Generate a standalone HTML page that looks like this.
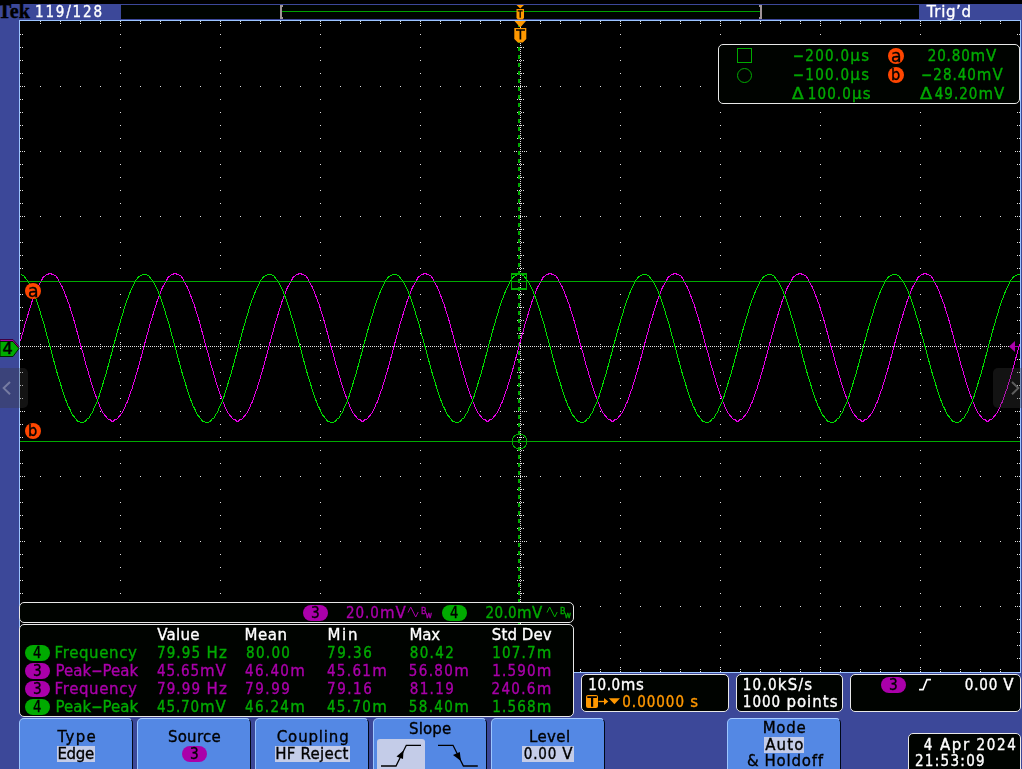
<!DOCTYPE html>
<html lang="en"><head><meta charset="utf-8"><title>Tek oscilloscope</title>
<style>
html,body{margin:0;padding:0}
body{width:1022px;height:769px;overflow:hidden;background:#3c4899;position:relative;font-family:"DejaVu Sans","Liberation Sans",sans-serif;font-size:14px}
.abs{position:absolute}
.t{position:absolute;white-space:pre;line-height:16px;transform-origin:0 0;font-size:15px;-webkit-text-stroke:0.35px}
.box{position:absolute;background:#000300;border:1px solid #e8e8e8;border-radius:5px;box-sizing:border-box}
.c{font-family:"DejaVu Sans Condensed","DejaVu Sans","Liberation Sans",sans-serif}
.pill{position:absolute;border-radius:8px}
.btn{position:absolute;top:718px;height:60px;background:#5488e4;border-radius:5px 5px 0 0;box-sizing:border-box;border-top:1px solid #a8ccff;border-left:1px solid #9cc6ff;border-right:1px solid #000818}
.hl{position:absolute;background:#c4cce8}
.circ{position:absolute;width:16px;height:16px;border-radius:8px;background:#ff4600}
</style></head><body>
<div class="abs" style="left:0;top:0;width:1022px;height:4px;background:#000"></div>
<div class="abs" style="left:121px;top:5px;width:798px;height:14px;background:#000400"></div>
<div class="abs" style="left:19px;top:20px;width:1000px;height:651px;background:#000;border:1px solid #9cc4ff"></div>
<svg class="abs" style="left:0;top:0" width="1022" height="769" viewBox="0 0 1022 769">
<g shape-rendering="crispEdges">
<line x1="282" y1="11.5" x2="760" y2="11.5" stroke="#00a000" stroke-width="1"/>
<path d="M280 5h3v2h-1v10h1v2h-3zM762 5h-3v2h1v10h-1v2h3z" fill="#a09498"/>
</g>
<path d="M516.5 5h7.5l-3.75 3.5zM516.5 9h7.5v9l-1.5 1.5h-4.5l-1.5 -1.5z" fill="#ff9800"/>
<path d="M517.7 10.8h5M520.2 10.8v7" stroke="#000" stroke-width="1.3" fill="none"/>
</svg>
<svg class="abs" style="left:0;top:0" width="1022" height="769" viewBox="0 0 1022 769" shape-rendering="crispEdges">
<line x1="20" y1="86.5" x2="1020" y2="86.5" stroke="#e0e0e0" stroke-dasharray="1 19"/>
<line x1="20" y1="151.5" x2="1020" y2="151.5" stroke="#e0e0e0" stroke-dasharray="1 19"/>
<line x1="20" y1="216.5" x2="1020" y2="216.5" stroke="#e0e0e0" stroke-dasharray="1 19"/>
<line x1="20" y1="281.5" x2="1020" y2="281.5" stroke="#e0e0e0" stroke-dasharray="1 19"/>
<line x1="20" y1="411.5" x2="1020" y2="411.5" stroke="#e0e0e0" stroke-dasharray="1 19"/>
<line x1="20" y1="476.5" x2="1020" y2="476.5" stroke="#e0e0e0" stroke-dasharray="1 19"/>
<line x1="20" y1="541.5" x2="1020" y2="541.5" stroke="#e0e0e0" stroke-dasharray="1 19"/>
<line x1="20" y1="606.5" x2="1020" y2="606.5" stroke="#e0e0e0" stroke-dasharray="1 19"/>
<line x1="120.5" y1="21" x2="120.5" y2="672" stroke="#e0e0e0" stroke-dasharray="1 12"/>
<line x1="220.5" y1="21" x2="220.5" y2="672" stroke="#e0e0e0" stroke-dasharray="1 12"/>
<line x1="320.5" y1="21" x2="320.5" y2="672" stroke="#e0e0e0" stroke-dasharray="1 12"/>
<line x1="420.5" y1="21" x2="420.5" y2="672" stroke="#e0e0e0" stroke-dasharray="1 12"/>
<line x1="620.5" y1="21" x2="620.5" y2="672" stroke="#e0e0e0" stroke-dasharray="1 12"/>
<line x1="720.5" y1="21" x2="720.5" y2="672" stroke="#e0e0e0" stroke-dasharray="1 12"/>
<line x1="820.5" y1="21" x2="820.5" y2="672" stroke="#e0e0e0" stroke-dasharray="1 12"/>
<line x1="920.5" y1="21" x2="920.5" y2="672" stroke="#e0e0e0" stroke-dasharray="1 12"/>
<line x1="20" y1="346.5" x2="1020" y2="346.5" stroke="#e0e0e0" stroke-dasharray="1 1"/>
<line x1="520.5" y1="21" x2="520.5" y2="672" stroke="#e0e0e0" stroke-dasharray="1 1"/>
<path d="M40.5 344v5M60.5 344v5M80.5 344v5M100.5 344v5M120.5 342v9M140.5 344v5M160.5 344v5M180.5 344v5M200.5 344v5M220.5 342v9M240.5 344v5M260.5 344v5M280.5 344v5M300.5 344v5M320.5 342v9M340.5 344v5M360.5 344v5M380.5 344v5M400.5 344v5M420.5 342v9M440.5 344v5M460.5 344v5M480.5 344v5M500.5 344v5M540.5 344v5M560.5 344v5M580.5 344v5M600.5 344v5M620.5 342v9M640.5 344v5M660.5 344v5M680.5 344v5M700.5 344v5M720.5 342v9M740.5 344v5M760.5 344v5M780.5 344v5M800.5 344v5M820.5 342v9M840.5 344v5M860.5 344v5M880.5 344v5M900.5 344v5M920.5 342v9M940.5 344v5M960.5 344v5M980.5 344v5M1000.5 344v5M517 34.5h7M517 47.5h7M517 60.5h7M517 73.5h7M514 86.5h13M517 99.5h7M517 112.5h7M517 125.5h7M517 138.5h7M514 151.5h13M517 164.5h7M517 177.5h7M517 190.5h7M517 203.5h7M514 216.5h13M517 229.5h7M517 242.5h7M517 255.5h7M517 268.5h7M514 281.5h13M517 294.5h7M517 307.5h7M517 320.5h7M517 333.5h7M517 359.5h7M517 372.5h7M517 385.5h7M517 398.5h7M514 411.5h13M517 424.5h7M517 437.5h7M517 450.5h7M517 463.5h7M514 476.5h13M517 489.5h7M517 502.5h7M517 515.5h7M517 528.5h7M514 541.5h13M517 554.5h7M517 567.5h7M517 580.5h7M517 593.5h7M514 606.5h13M517 619.5h7M517 632.5h7M517 645.5h7M517 658.5h7" stroke="#e0e0e0" stroke-dasharray="1 1" fill="none"/>
<path d="M40.5 21v3M40.5 669v3M60.5 21v3M60.5 669v3M80.5 21v3M80.5 669v3M100.5 21v3M100.5 669v3M120.5 21v5M120.5 667v5M140.5 21v3M140.5 669v3M160.5 21v3M160.5 669v3M180.5 21v3M180.5 669v3M200.5 21v3M200.5 669v3M220.5 21v5M220.5 667v5M240.5 21v3M240.5 669v3M260.5 21v3M260.5 669v3M280.5 21v3M280.5 669v3M300.5 21v3M300.5 669v3M320.5 21v5M320.5 667v5M340.5 21v3M340.5 669v3M360.5 21v3M360.5 669v3M380.5 21v3M380.5 669v3M400.5 21v3M400.5 669v3M420.5 21v5M420.5 667v5M440.5 21v3M440.5 669v3M460.5 21v3M460.5 669v3M480.5 21v3M480.5 669v3M500.5 21v3M500.5 669v3M520.5 21v5M520.5 667v5M540.5 21v3M540.5 669v3M560.5 21v3M560.5 669v3M580.5 21v3M580.5 669v3M600.5 21v3M600.5 669v3M620.5 21v5M620.5 667v5M640.5 21v3M640.5 669v3M660.5 21v3M660.5 669v3M680.5 21v3M680.5 669v3M700.5 21v3M700.5 669v3M720.5 21v5M720.5 667v5M740.5 21v3M740.5 669v3M760.5 21v3M760.5 669v3M780.5 21v3M780.5 669v3M800.5 21v3M800.5 669v3M820.5 21v5M820.5 667v5M840.5 21v3M840.5 669v3M860.5 21v3M860.5 669v3M880.5 21v3M880.5 669v3M900.5 21v3M900.5 669v3M920.5 21v5M920.5 667v5M940.5 21v3M940.5 669v3M960.5 21v3M960.5 669v3M980.5 21v3M980.5 669v3M1000.5 21v3M1000.5 669v3M20 34.5h3M1017 34.5h3M20 47.5h3M1017 47.5h3M20 60.5h3M1017 60.5h3M20 73.5h3M1017 73.5h3M20 86.5h5M1015 86.5h5M20 99.5h3M1017 99.5h3M20 112.5h3M1017 112.5h3M20 125.5h3M1017 125.5h3M20 138.5h3M1017 138.5h3M20 151.5h5M1015 151.5h5M20 164.5h3M1017 164.5h3M20 177.5h3M1017 177.5h3M20 190.5h3M1017 190.5h3M20 203.5h3M1017 203.5h3M20 216.5h5M1015 216.5h5M20 229.5h3M1017 229.5h3M20 242.5h3M1017 242.5h3M20 255.5h3M1017 255.5h3M20 268.5h3M1017 268.5h3M20 281.5h5M1015 281.5h5M20 294.5h3M1017 294.5h3M20 307.5h3M1017 307.5h3M20 320.5h3M1017 320.5h3M20 333.5h3M1017 333.5h3M20 346.5h5M1015 346.5h5M20 359.5h3M1017 359.5h3M20 372.5h3M1017 372.5h3M20 385.5h3M1017 385.5h3M20 398.5h3M1017 398.5h3M20 411.5h5M1015 411.5h5M20 424.5h3M1017 424.5h3M20 437.5h3M1017 437.5h3M20 450.5h3M1017 450.5h3M20 463.5h3M1017 463.5h3M20 476.5h5M1015 476.5h5M20 489.5h3M1017 489.5h3M20 502.5h3M1017 502.5h3M20 515.5h3M1017 515.5h3M20 528.5h3M1017 528.5h3M20 541.5h5M1015 541.5h5M20 554.5h3M1017 554.5h3M20 567.5h3M1017 567.5h3M20 580.5h3M1017 580.5h3M20 593.5h3M1017 593.5h3M20 606.5h5M1015 606.5h5M20 619.5h3M1017 619.5h3M20 632.5h3M1017 632.5h3M20 645.5h3M1017 645.5h3M20 658.5h3M1017 658.5h3" stroke="#e0e0e0" stroke-dasharray="1 1" fill="none"/>
<line x1="519" y1="23" x2="519" y2="672" stroke="#00aa00" stroke-width="2" stroke-dasharray="4 4"/>
<polyline points="20.5,340.6 21.5,336.7 22.5,334.1 23.5,330.2 24.5,326.3 25.5,322.4 26.5,319.8 27.5,315.9 28.5,313.3 29.5,309.4 30.5,306.8 31.5,302.9 32.5,300.3 33.5,297.7 34.5,295.1 35.5,292.5 36.5,289.9 37.5,287.3 38.5,286.0 39.5,283.4 40.5,282.1 41.5,280.8 42.5,278.2 43.5,276.9 44.5,276.9 45.5,275.6 46.5,274.3 47.5,274.3 48.5,274.3 49.5,273.0 50.5,273.0 51.5,274.3 52.5,274.3 53.5,274.3 54.5,275.6 55.5,275.6 56.5,276.9 57.5,278.2 58.5,279.5 59.5,282.1 60.5,283.4 61.5,286.0 62.5,287.3 63.5,289.9 64.5,292.5 65.5,295.1 66.5,297.7 67.5,300.3 68.5,302.9 69.5,305.5 70.5,309.4 71.5,312.0 72.5,315.9 73.5,318.5 74.5,322.4 75.5,326.3 76.5,330.2 77.5,332.8 78.5,336.7 79.5,340.6 80.5,344.5 81.5,348.4 82.5,351.0 83.5,354.9 84.5,358.8 85.5,362.7 86.5,366.6 87.5,369.2 88.5,373.1 89.5,377.0 90.5,379.6 91.5,383.5 92.5,386.1 93.5,390.0 94.5,392.6 95.5,395.2 96.5,397.8 97.5,400.4 98.5,403.0 99.5,405.6 100.5,408.2 101.5,409.5 102.5,412.1 103.5,413.4 104.5,414.7 105.5,416.0 106.5,417.3 107.5,418.6 108.5,419.9 109.5,419.9 110.5,419.9 111.5,421.2 112.5,421.2 113.5,421.2 114.5,419.9 115.5,419.9 116.5,419.9 117.5,418.6 118.5,417.3 119.5,416.0 120.5,414.7 121.5,413.4 122.5,412.1 123.5,409.5 124.5,408.2 125.5,405.6 126.5,403.0 127.5,401.7 128.5,399.1 129.5,395.2 130.5,392.6 131.5,390.0 132.5,387.4 133.5,383.5 134.5,380.9 135.5,377.0 136.5,373.1 137.5,370.5 138.5,366.6 139.5,362.7 140.5,358.8 141.5,356.2 142.5,352.3 143.5,348.4 144.5,344.5 145.5,340.6 146.5,336.7 147.5,334.1 148.5,330.2 149.5,326.3 150.5,322.4 151.5,319.8 152.5,315.9 153.5,313.3 154.5,309.4 155.5,306.8 156.5,302.9 157.5,300.3 158.5,297.7 159.5,295.1 160.5,292.5 161.5,289.9 162.5,287.3 163.5,286.0 164.5,283.4 165.5,282.1 166.5,280.8 167.5,278.2 168.5,276.9 169.5,276.9 170.5,275.6 171.5,274.3 172.5,274.3 173.5,274.3 174.5,273.0 175.5,273.0 176.5,274.3 177.5,274.3 178.5,274.3 179.5,275.6 180.5,275.6 181.5,276.9 182.5,278.2 183.5,279.5 184.5,282.1 185.5,283.4 186.5,286.0 187.5,287.3 188.5,289.9 189.5,292.5 190.5,295.1 191.5,297.7 192.5,300.3 193.5,302.9 194.5,305.5 195.5,309.4 196.5,312.0 197.5,315.9 198.5,318.5 199.5,322.4 200.5,326.3 201.5,330.2 202.5,332.8 203.5,336.7 204.5,340.6 205.5,344.5 206.5,348.4 207.5,351.0 208.5,354.9 209.5,358.8 210.5,362.7 211.5,366.6 212.5,369.2 213.5,373.1 214.5,377.0 215.5,379.6 216.5,383.5 217.5,386.1 218.5,390.0 219.5,392.6 220.5,395.2 221.5,397.8 222.5,400.4 223.5,403.0 224.5,405.6 225.5,408.2 226.5,409.5 227.5,412.1 228.5,413.4 229.5,414.7 230.5,416.0 231.5,417.3 232.5,418.6 233.5,419.9 234.5,419.9 235.5,419.9 236.5,421.2 237.5,421.2 238.5,421.2 239.5,419.9 240.5,419.9 241.5,419.9 242.5,418.6 243.5,417.3 244.5,416.0 245.5,414.7 246.5,413.4 247.5,412.1 248.5,409.5 249.5,408.2 250.5,405.6 251.5,403.0 252.5,401.7 253.5,399.1 254.5,395.2 255.5,392.6 256.5,390.0 257.5,387.4 258.5,383.5 259.5,380.9 260.5,377.0 261.5,373.1 262.5,370.5 263.5,366.6 264.5,362.7 265.5,358.8 266.5,356.2 267.5,352.3 268.5,348.4 269.5,344.5 270.5,340.6 271.5,336.7 272.5,334.1 273.5,330.2 274.5,326.3 275.5,322.4 276.5,319.8 277.5,315.9 278.5,313.3 279.5,309.4 280.5,306.8 281.5,302.9 282.5,300.3 283.5,297.7 284.5,295.1 285.5,292.5 286.5,289.9 287.5,287.3 288.5,286.0 289.5,283.4 290.5,282.1 291.5,280.8 292.5,278.2 293.5,276.9 294.5,276.9 295.5,275.6 296.5,274.3 297.5,274.3 298.5,274.3 299.5,273.0 300.5,273.0 301.5,274.3 302.5,274.3 303.5,274.3 304.5,275.6 305.5,275.6 306.5,276.9 307.5,278.2 308.5,279.5 309.5,282.1 310.5,283.4 311.5,286.0 312.5,287.3 313.5,289.9 314.5,292.5 315.5,295.1 316.5,297.7 317.5,300.3 318.5,302.9 319.5,305.5 320.5,309.4 321.5,312.0 322.5,315.9 323.5,318.5 324.5,322.4 325.5,326.3 326.5,330.2 327.5,332.8 328.5,336.7 329.5,340.6 330.5,344.5 331.5,348.4 332.5,351.0 333.5,354.9 334.5,358.8 335.5,362.7 336.5,366.6 337.5,369.2 338.5,373.1 339.5,377.0 340.5,379.6 341.5,383.5 342.5,386.1 343.5,390.0 344.5,392.6 345.5,395.2 346.5,397.8 347.5,400.4 348.5,403.0 349.5,405.6 350.5,408.2 351.5,409.5 352.5,412.1 353.5,413.4 354.5,414.7 355.5,416.0 356.5,417.3 357.5,418.6 358.5,419.9 359.5,419.9 360.5,419.9 361.5,421.2 362.5,421.2 363.5,421.2 364.5,419.9 365.5,419.9 366.5,419.9 367.5,418.6 368.5,417.3 369.5,416.0 370.5,414.7 371.5,413.4 372.5,412.1 373.5,409.5 374.5,408.2 375.5,405.6 376.5,403.0 377.5,401.7 378.5,399.1 379.5,395.2 380.5,392.6 381.5,390.0 382.5,387.4 383.5,383.5 384.5,380.9 385.5,377.0 386.5,373.1 387.5,370.5 388.5,366.6 389.5,362.7 390.5,358.8 391.5,356.2 392.5,352.3 393.5,348.4 394.5,344.5 395.5,340.6 396.5,336.7 397.5,334.1 398.5,330.2 399.5,326.3 400.5,322.4 401.5,319.8 402.5,315.9 403.5,313.3 404.5,309.4 405.5,306.8 406.5,302.9 407.5,300.3 408.5,297.7 409.5,295.1 410.5,292.5 411.5,289.9 412.5,287.3 413.5,286.0 414.5,283.4 415.5,282.1 416.5,280.8 417.5,278.2 418.5,276.9 419.5,276.9 420.5,275.6 421.5,274.3 422.5,274.3 423.5,274.3 424.5,273.0 425.5,273.0 426.5,274.3 427.5,274.3 428.5,274.3 429.5,275.6 430.5,275.6 431.5,276.9 432.5,278.2 433.5,279.5 434.5,282.1 435.5,283.4 436.5,286.0 437.5,287.3 438.5,289.9 439.5,292.5 440.5,295.1 441.5,297.7 442.5,300.3 443.5,302.9 444.5,305.5 445.5,309.4 446.5,312.0 447.5,315.9 448.5,318.5 449.5,322.4 450.5,326.3 451.5,330.2 452.5,332.8 453.5,336.7 454.5,340.6 455.5,344.5 456.5,348.4 457.5,351.0 458.5,354.9 459.5,358.8 460.5,362.7 461.5,366.6 462.5,369.2 463.5,373.1 464.5,377.0 465.5,379.6 466.5,383.5 467.5,386.1 468.5,390.0 469.5,392.6 470.5,395.2 471.5,397.8 472.5,400.4 473.5,403.0 474.5,405.6 475.5,408.2 476.5,409.5 477.5,412.1 478.5,413.4 479.5,414.7 480.5,416.0 481.5,417.3 482.5,418.6 483.5,419.9 484.5,419.9 485.5,419.9 486.5,421.2 487.5,421.2 488.5,421.2 489.5,419.9 490.5,419.9 491.5,419.9 492.5,418.6 493.5,417.3 494.5,416.0 495.5,414.7 496.5,413.4 497.5,412.1 498.5,409.5 499.5,408.2 500.5,405.6 501.5,403.0 502.5,401.7 503.5,399.1 504.5,395.2 505.5,392.6 506.5,390.0 507.5,387.4 508.5,383.5 509.5,380.9 510.5,377.0 511.5,373.1 512.5,370.5 513.5,366.6 514.5,362.7 515.5,358.8 516.5,356.2 517.5,352.3 518.5,348.4 519.5,344.5 520.5,340.6 521.5,336.7 522.5,334.1 523.5,330.2 524.5,326.3 525.5,322.4 526.5,319.8 527.5,315.9 528.5,313.3 529.5,309.4 530.5,306.8 531.5,302.9 532.5,300.3 533.5,297.7 534.5,295.1 535.5,292.5 536.5,289.9 537.5,287.3 538.5,286.0 539.5,283.4 540.5,282.1 541.5,280.8 542.5,278.2 543.5,276.9 544.5,276.9 545.5,275.6 546.5,274.3 547.5,274.3 548.5,274.3 549.5,273.0 550.5,273.0 551.5,274.3 552.5,274.3 553.5,274.3 554.5,275.6 555.5,275.6 556.5,276.9 557.5,278.2 558.5,279.5 559.5,282.1 560.5,283.4 561.5,286.0 562.5,287.3 563.5,289.9 564.5,292.5 565.5,295.1 566.5,297.7 567.5,300.3 568.5,302.9 569.5,305.5 570.5,309.4 571.5,312.0 572.5,315.9 573.5,318.5 574.5,322.4 575.5,326.3 576.5,330.2 577.5,332.8 578.5,336.7 579.5,340.6 580.5,344.5 581.5,348.4 582.5,351.0 583.5,354.9 584.5,358.8 585.5,362.7 586.5,366.6 587.5,369.2 588.5,373.1 589.5,377.0 590.5,379.6 591.5,383.5 592.5,386.1 593.5,390.0 594.5,392.6 595.5,395.2 596.5,397.8 597.5,400.4 598.5,403.0 599.5,405.6 600.5,408.2 601.5,409.5 602.5,412.1 603.5,413.4 604.5,414.7 605.5,416.0 606.5,417.3 607.5,418.6 608.5,419.9 609.5,419.9 610.5,419.9 611.5,421.2 612.5,421.2 613.5,421.2 614.5,419.9 615.5,419.9 616.5,419.9 617.5,418.6 618.5,417.3 619.5,416.0 620.5,414.7 621.5,413.4 622.5,412.1 623.5,409.5 624.5,408.2 625.5,405.6 626.5,403.0 627.5,401.7 628.5,399.1 629.5,395.2 630.5,392.6 631.5,390.0 632.5,387.4 633.5,383.5 634.5,380.9 635.5,377.0 636.5,373.1 637.5,370.5 638.5,366.6 639.5,362.7 640.5,358.8 641.5,356.2 642.5,352.3 643.5,348.4 644.5,344.5 645.5,340.6 646.5,336.7 647.5,334.1 648.5,330.2 649.5,326.3 650.5,322.4 651.5,319.8 652.5,315.9 653.5,313.3 654.5,309.4 655.5,306.8 656.5,302.9 657.5,300.3 658.5,297.7 659.5,295.1 660.5,292.5 661.5,289.9 662.5,287.3 663.5,286.0 664.5,283.4 665.5,282.1 666.5,280.8 667.5,278.2 668.5,276.9 669.5,276.9 670.5,275.6 671.5,274.3 672.5,274.3 673.5,274.3 674.5,273.0 675.5,273.0 676.5,274.3 677.5,274.3 678.5,274.3 679.5,275.6 680.5,275.6 681.5,276.9 682.5,278.2 683.5,279.5 684.5,282.1 685.5,283.4 686.5,286.0 687.5,287.3 688.5,289.9 689.5,292.5 690.5,295.1 691.5,297.7 692.5,300.3 693.5,302.9 694.5,305.5 695.5,309.4 696.5,312.0 697.5,315.9 698.5,318.5 699.5,322.4 700.5,326.3 701.5,330.2 702.5,332.8 703.5,336.7 704.5,340.6 705.5,344.5 706.5,348.4 707.5,351.0 708.5,354.9 709.5,358.8 710.5,362.7 711.5,366.6 712.5,369.2 713.5,373.1 714.5,377.0 715.5,379.6 716.5,383.5 717.5,386.1 718.5,390.0 719.5,392.6 720.5,395.2 721.5,397.8 722.5,400.4 723.5,403.0 724.5,405.6 725.5,408.2 726.5,409.5 727.5,412.1 728.5,413.4 729.5,414.7 730.5,416.0 731.5,417.3 732.5,418.6 733.5,419.9 734.5,419.9 735.5,419.9 736.5,421.2 737.5,421.2 738.5,421.2 739.5,419.9 740.5,419.9 741.5,419.9 742.5,418.6 743.5,417.3 744.5,416.0 745.5,414.7 746.5,413.4 747.5,412.1 748.5,409.5 749.5,408.2 750.5,405.6 751.5,403.0 752.5,401.7 753.5,399.1 754.5,395.2 755.5,392.6 756.5,390.0 757.5,387.4 758.5,383.5 759.5,380.9 760.5,377.0 761.5,373.1 762.5,370.5 763.5,366.6 764.5,362.7 765.5,358.8 766.5,356.2 767.5,352.3 768.5,348.4 769.5,344.5 770.5,340.6 771.5,336.7 772.5,334.1 773.5,330.2 774.5,326.3 775.5,322.4 776.5,319.8 777.5,315.9 778.5,313.3 779.5,309.4 780.5,306.8 781.5,302.9 782.5,300.3 783.5,297.7 784.5,295.1 785.5,292.5 786.5,289.9 787.5,287.3 788.5,286.0 789.5,283.4 790.5,282.1 791.5,280.8 792.5,278.2 793.5,276.9 794.5,276.9 795.5,275.6 796.5,274.3 797.5,274.3 798.5,274.3 799.5,273.0 800.5,273.0 801.5,274.3 802.5,274.3 803.5,274.3 804.5,275.6 805.5,275.6 806.5,276.9 807.5,278.2 808.5,279.5 809.5,282.1 810.5,283.4 811.5,286.0 812.5,287.3 813.5,289.9 814.5,292.5 815.5,295.1 816.5,297.7 817.5,300.3 818.5,302.9 819.5,305.5 820.5,309.4 821.5,312.0 822.5,315.9 823.5,318.5 824.5,322.4 825.5,326.3 826.5,330.2 827.5,332.8 828.5,336.7 829.5,340.6 830.5,344.5 831.5,348.4 832.5,351.0 833.5,354.9 834.5,358.8 835.5,362.7 836.5,366.6 837.5,369.2 838.5,373.1 839.5,377.0 840.5,379.6 841.5,383.5 842.5,386.1 843.5,390.0 844.5,392.6 845.5,395.2 846.5,397.8 847.5,400.4 848.5,403.0 849.5,405.6 850.5,408.2 851.5,409.5 852.5,412.1 853.5,413.4 854.5,414.7 855.5,416.0 856.5,417.3 857.5,418.6 858.5,419.9 859.5,419.9 860.5,419.9 861.5,421.2 862.5,421.2 863.5,421.2 864.5,419.9 865.5,419.9 866.5,419.9 867.5,418.6 868.5,417.3 869.5,416.0 870.5,414.7 871.5,413.4 872.5,412.1 873.5,409.5 874.5,408.2 875.5,405.6 876.5,403.0 877.5,401.7 878.5,399.1 879.5,395.2 880.5,392.6 881.5,390.0 882.5,387.4 883.5,383.5 884.5,380.9 885.5,377.0 886.5,373.1 887.5,370.5 888.5,366.6 889.5,362.7 890.5,358.8 891.5,356.2 892.5,352.3 893.5,348.4 894.5,344.5 895.5,340.6 896.5,336.7 897.5,334.1 898.5,330.2 899.5,326.3 900.5,322.4 901.5,319.8 902.5,315.9 903.5,313.3 904.5,309.4 905.5,306.8 906.5,302.9 907.5,300.3 908.5,297.7 909.5,295.1 910.5,292.5 911.5,289.9 912.5,287.3 913.5,286.0 914.5,283.4 915.5,282.1 916.5,280.8 917.5,278.2 918.5,276.9 919.5,276.9 920.5,275.6 921.5,274.3 922.5,274.3 923.5,274.3 924.5,273.0 925.5,273.0 926.5,274.3 927.5,274.3 928.5,274.3 929.5,275.6 930.5,275.6 931.5,276.9 932.5,278.2 933.5,279.5 934.5,282.1 935.5,283.4 936.5,286.0 937.5,287.3 938.5,289.9 939.5,292.5 940.5,295.1 941.5,297.7 942.5,300.3 943.5,302.9 944.5,305.5 945.5,309.4 946.5,312.0 947.5,315.9 948.5,318.5 949.5,322.4 950.5,326.3 951.5,330.2 952.5,332.8 953.5,336.7 954.5,340.6 955.5,344.5 956.5,348.4 957.5,351.0 958.5,354.9 959.5,358.8 960.5,362.7 961.5,366.6 962.5,369.2 963.5,373.1 964.5,377.0 965.5,379.6 966.5,383.5 967.5,386.1 968.5,390.0 969.5,392.6 970.5,395.2 971.5,397.8 972.5,400.4 973.5,403.0 974.5,405.6 975.5,408.2 976.5,409.5 977.5,412.1 978.5,413.4 979.5,414.7 980.5,416.0 981.5,417.3 982.5,418.6 983.5,419.9 984.5,419.9 985.5,419.9 986.5,421.2 987.5,421.2 988.5,421.2 989.5,419.9 990.5,419.9 991.5,419.9 992.5,418.6 993.5,417.3 994.5,416.0 995.5,414.7 996.5,413.4 997.5,412.1 998.5,409.5 999.5,408.2 1000.5,405.6 1001.5,403.0 1002.5,401.7 1003.5,399.1 1004.5,395.2 1005.5,392.6 1006.5,390.0 1007.5,387.4 1008.5,383.5 1009.5,380.9 1010.5,377.0 1011.5,373.1 1012.5,370.5 1013.5,366.6 1014.5,362.7 1015.5,358.8 1016.5,356.2 1017.5,352.3 1018.5,348.4 1019.5,344.5" fill="none" stroke="#e800e8" stroke-width="1"/>
<polyline points="20.5,274.3 21.5,274.3 22.5,275.6 23.5,275.6 24.5,276.9 25.5,278.2 26.5,279.5 27.5,280.8 28.5,282.1 29.5,283.4 30.5,286.0 31.5,288.6 32.5,289.9 33.5,292.5 34.5,295.1 35.5,297.7 36.5,300.3 37.5,302.9 38.5,306.8 39.5,309.4 40.5,313.3 41.5,315.9 42.5,319.8 43.5,322.4 44.5,326.3 45.5,330.2 46.5,334.1 47.5,338.0 48.5,340.6 49.5,344.5 50.5,348.4 51.5,352.3 52.5,356.2 53.5,360.1 54.5,362.7 55.5,366.6 56.5,370.5 57.5,374.4 58.5,377.0 59.5,380.9 60.5,383.5 61.5,387.4 62.5,390.0 63.5,393.9 64.5,396.5 65.5,399.1 66.5,401.7 67.5,404.3 68.5,406.9 69.5,408.2 70.5,410.8 71.5,413.4 72.5,414.7 73.5,416.0 74.5,417.3 75.5,418.6 76.5,419.9 77.5,421.2 78.5,421.2 79.5,421.2 80.5,422.5 81.5,422.5 82.5,422.5 83.5,422.5 84.5,421.2 85.5,421.2 86.5,419.9 87.5,418.6 88.5,418.6 89.5,417.3 90.5,414.7 91.5,413.4 92.5,412.1 93.5,409.5 94.5,406.9 95.5,405.6 96.5,403.0 97.5,400.4 98.5,397.8 99.5,395.2 100.5,391.3 101.5,388.7 102.5,384.8 103.5,382.2 104.5,378.3 105.5,375.7 106.5,371.8 107.5,367.9 108.5,365.3 109.5,361.4 110.5,357.5 111.5,353.6 112.5,349.7 113.5,345.8 114.5,341.9 115.5,339.3 116.5,335.4 117.5,331.5 118.5,327.6 119.5,325.0 120.5,321.1 121.5,317.2 122.5,314.6 123.5,310.7 124.5,308.1 125.5,304.2 126.5,301.6 127.5,299.0 128.5,296.4 129.5,293.8 130.5,291.2 131.5,288.6 132.5,287.3 133.5,284.7 134.5,283.4 135.5,280.8 136.5,279.5 137.5,278.2 138.5,276.9 139.5,276.9 140.5,275.6 141.5,275.6 142.5,274.3 143.5,274.3 144.5,274.3 145.5,274.3 146.5,274.3 147.5,275.6 148.5,275.6 149.5,276.9 150.5,278.2 151.5,279.5 152.5,280.8 153.5,282.1 154.5,283.4 155.5,286.0 156.5,288.6 157.5,289.9 158.5,292.5 159.5,295.1 160.5,297.7 161.5,300.3 162.5,302.9 163.5,306.8 164.5,309.4 165.5,313.3 166.5,315.9 167.5,319.8 168.5,322.4 169.5,326.3 170.5,330.2 171.5,334.1 172.5,338.0 173.5,340.6 174.5,344.5 175.5,348.4 176.5,352.3 177.5,356.2 178.5,360.1 179.5,362.7 180.5,366.6 181.5,370.5 182.5,374.4 183.5,377.0 184.5,380.9 185.5,383.5 186.5,387.4 187.5,390.0 188.5,393.9 189.5,396.5 190.5,399.1 191.5,401.7 192.5,404.3 193.5,406.9 194.5,408.2 195.5,410.8 196.5,413.4 197.5,414.7 198.5,416.0 199.5,417.3 200.5,418.6 201.5,419.9 202.5,421.2 203.5,421.2 204.5,421.2 205.5,422.5 206.5,422.5 207.5,422.5 208.5,422.5 209.5,421.2 210.5,421.2 211.5,419.9 212.5,418.6 213.5,418.6 214.5,417.3 215.5,414.7 216.5,413.4 217.5,412.1 218.5,409.5 219.5,406.9 220.5,405.6 221.5,403.0 222.5,400.4 223.5,397.8 224.5,395.2 225.5,391.3 226.5,388.7 227.5,384.8 228.5,382.2 229.5,378.3 230.5,375.7 231.5,371.8 232.5,367.9 233.5,365.3 234.5,361.4 235.5,357.5 236.5,353.6 237.5,349.7 238.5,345.8 239.5,341.9 240.5,339.3 241.5,335.4 242.5,331.5 243.5,327.6 244.5,325.0 245.5,321.1 246.5,317.2 247.5,314.6 248.5,310.7 249.5,308.1 250.5,304.2 251.5,301.6 252.5,299.0 253.5,296.4 254.5,293.8 255.5,291.2 256.5,288.6 257.5,287.3 258.5,284.7 259.5,283.4 260.5,280.8 261.5,279.5 262.5,278.2 263.5,276.9 264.5,276.9 265.5,275.6 266.5,275.6 267.5,274.3 268.5,274.3 269.5,274.3 270.5,274.3 271.5,274.3 272.5,275.6 273.5,275.6 274.5,276.9 275.5,278.2 276.5,279.5 277.5,280.8 278.5,282.1 279.5,283.4 280.5,286.0 281.5,288.6 282.5,289.9 283.5,292.5 284.5,295.1 285.5,297.7 286.5,300.3 287.5,302.9 288.5,306.8 289.5,309.4 290.5,313.3 291.5,315.9 292.5,319.8 293.5,322.4 294.5,326.3 295.5,330.2 296.5,334.1 297.5,338.0 298.5,340.6 299.5,344.5 300.5,348.4 301.5,352.3 302.5,356.2 303.5,360.1 304.5,362.7 305.5,366.6 306.5,370.5 307.5,374.4 308.5,377.0 309.5,380.9 310.5,383.5 311.5,387.4 312.5,390.0 313.5,393.9 314.5,396.5 315.5,399.1 316.5,401.7 317.5,404.3 318.5,406.9 319.5,408.2 320.5,410.8 321.5,413.4 322.5,414.7 323.5,416.0 324.5,417.3 325.5,418.6 326.5,419.9 327.5,421.2 328.5,421.2 329.5,421.2 330.5,422.5 331.5,422.5 332.5,422.5 333.5,422.5 334.5,421.2 335.5,421.2 336.5,419.9 337.5,418.6 338.5,418.6 339.5,417.3 340.5,414.7 341.5,413.4 342.5,412.1 343.5,409.5 344.5,406.9 345.5,405.6 346.5,403.0 347.5,400.4 348.5,397.8 349.5,395.2 350.5,391.3 351.5,388.7 352.5,384.8 353.5,382.2 354.5,378.3 355.5,375.7 356.5,371.8 357.5,367.9 358.5,365.3 359.5,361.4 360.5,357.5 361.5,353.6 362.5,349.7 363.5,345.8 364.5,341.9 365.5,339.3 366.5,335.4 367.5,331.5 368.5,327.6 369.5,325.0 370.5,321.1 371.5,317.2 372.5,314.6 373.5,310.7 374.5,308.1 375.5,304.2 376.5,301.6 377.5,299.0 378.5,296.4 379.5,293.8 380.5,291.2 381.5,288.6 382.5,287.3 383.5,284.7 384.5,283.4 385.5,280.8 386.5,279.5 387.5,278.2 388.5,276.9 389.5,276.9 390.5,275.6 391.5,275.6 392.5,274.3 393.5,274.3 394.5,274.3 395.5,274.3 396.5,274.3 397.5,275.6 398.5,275.6 399.5,276.9 400.5,278.2 401.5,279.5 402.5,280.8 403.5,282.1 404.5,283.4 405.5,286.0 406.5,288.6 407.5,289.9 408.5,292.5 409.5,295.1 410.5,297.7 411.5,300.3 412.5,302.9 413.5,306.8 414.5,309.4 415.5,313.3 416.5,315.9 417.5,319.8 418.5,322.4 419.5,326.3 420.5,330.2 421.5,334.1 422.5,338.0 423.5,340.6 424.5,344.5 425.5,348.4 426.5,352.3 427.5,356.2 428.5,360.1 429.5,362.7 430.5,366.6 431.5,370.5 432.5,374.4 433.5,377.0 434.5,380.9 435.5,383.5 436.5,387.4 437.5,390.0 438.5,393.9 439.5,396.5 440.5,399.1 441.5,401.7 442.5,404.3 443.5,406.9 444.5,408.2 445.5,410.8 446.5,413.4 447.5,414.7 448.5,416.0 449.5,417.3 450.5,418.6 451.5,419.9 452.5,421.2 453.5,421.2 454.5,421.2 455.5,422.5 456.5,422.5 457.5,422.5 458.5,422.5 459.5,421.2 460.5,421.2 461.5,419.9 462.5,418.6 463.5,418.6 464.5,417.3 465.5,414.7 466.5,413.4 467.5,412.1 468.5,409.5 469.5,406.9 470.5,405.6 471.5,403.0 472.5,400.4 473.5,397.8 474.5,395.2 475.5,391.3 476.5,388.7 477.5,384.8 478.5,382.2 479.5,378.3 480.5,375.7 481.5,371.8 482.5,367.9 483.5,365.3 484.5,361.4 485.5,357.5 486.5,353.6 487.5,349.7 488.5,345.8 489.5,341.9 490.5,339.3 491.5,335.4 492.5,331.5 493.5,327.6 494.5,325.0 495.5,321.1 496.5,317.2 497.5,314.6 498.5,310.7 499.5,308.1 500.5,304.2 501.5,301.6 502.5,299.0 503.5,296.4 504.5,293.8 505.5,291.2 506.5,288.6 507.5,287.3 508.5,284.7 509.5,283.4 510.5,280.8 511.5,279.5 512.5,278.2 513.5,276.9 514.5,276.9 515.5,275.6 516.5,275.6 517.5,274.3 518.5,274.3 519.5,274.3 520.5,274.3 521.5,274.3 522.5,275.6 523.5,275.6 524.5,276.9 525.5,278.2 526.5,279.5 527.5,280.8 528.5,282.1 529.5,283.4 530.5,286.0 531.5,288.6 532.5,289.9 533.5,292.5 534.5,295.1 535.5,297.7 536.5,300.3 537.5,302.9 538.5,306.8 539.5,309.4 540.5,313.3 541.5,315.9 542.5,319.8 543.5,322.4 544.5,326.3 545.5,330.2 546.5,334.1 547.5,338.0 548.5,340.6 549.5,344.5 550.5,348.4 551.5,352.3 552.5,356.2 553.5,360.1 554.5,362.7 555.5,366.6 556.5,370.5 557.5,374.4 558.5,377.0 559.5,380.9 560.5,383.5 561.5,387.4 562.5,390.0 563.5,393.9 564.5,396.5 565.5,399.1 566.5,401.7 567.5,404.3 568.5,406.9 569.5,408.2 570.5,410.8 571.5,413.4 572.5,414.7 573.5,416.0 574.5,417.3 575.5,418.6 576.5,419.9 577.5,421.2 578.5,421.2 579.5,421.2 580.5,422.5 581.5,422.5 582.5,422.5 583.5,422.5 584.5,421.2 585.5,421.2 586.5,419.9 587.5,418.6 588.5,418.6 589.5,417.3 590.5,414.7 591.5,413.4 592.5,412.1 593.5,409.5 594.5,406.9 595.5,405.6 596.5,403.0 597.5,400.4 598.5,397.8 599.5,395.2 600.5,391.3 601.5,388.7 602.5,384.8 603.5,382.2 604.5,378.3 605.5,375.7 606.5,371.8 607.5,367.9 608.5,365.3 609.5,361.4 610.5,357.5 611.5,353.6 612.5,349.7 613.5,345.8 614.5,341.9 615.5,339.3 616.5,335.4 617.5,331.5 618.5,327.6 619.5,325.0 620.5,321.1 621.5,317.2 622.5,314.6 623.5,310.7 624.5,308.1 625.5,304.2 626.5,301.6 627.5,299.0 628.5,296.4 629.5,293.8 630.5,291.2 631.5,288.6 632.5,287.3 633.5,284.7 634.5,283.4 635.5,280.8 636.5,279.5 637.5,278.2 638.5,276.9 639.5,276.9 640.5,275.6 641.5,275.6 642.5,274.3 643.5,274.3 644.5,274.3 645.5,274.3 646.5,274.3 647.5,275.6 648.5,275.6 649.5,276.9 650.5,278.2 651.5,279.5 652.5,280.8 653.5,282.1 654.5,283.4 655.5,286.0 656.5,288.6 657.5,289.9 658.5,292.5 659.5,295.1 660.5,297.7 661.5,300.3 662.5,302.9 663.5,306.8 664.5,309.4 665.5,313.3 666.5,315.9 667.5,319.8 668.5,322.4 669.5,326.3 670.5,330.2 671.5,334.1 672.5,338.0 673.5,340.6 674.5,344.5 675.5,348.4 676.5,352.3 677.5,356.2 678.5,360.1 679.5,362.7 680.5,366.6 681.5,370.5 682.5,374.4 683.5,377.0 684.5,380.9 685.5,383.5 686.5,387.4 687.5,390.0 688.5,393.9 689.5,396.5 690.5,399.1 691.5,401.7 692.5,404.3 693.5,406.9 694.5,408.2 695.5,410.8 696.5,413.4 697.5,414.7 698.5,416.0 699.5,417.3 700.5,418.6 701.5,419.9 702.5,421.2 703.5,421.2 704.5,421.2 705.5,422.5 706.5,422.5 707.5,422.5 708.5,422.5 709.5,421.2 710.5,421.2 711.5,419.9 712.5,418.6 713.5,418.6 714.5,417.3 715.5,414.7 716.5,413.4 717.5,412.1 718.5,409.5 719.5,406.9 720.5,405.6 721.5,403.0 722.5,400.4 723.5,397.8 724.5,395.2 725.5,391.3 726.5,388.7 727.5,384.8 728.5,382.2 729.5,378.3 730.5,375.7 731.5,371.8 732.5,367.9 733.5,365.3 734.5,361.4 735.5,357.5 736.5,353.6 737.5,349.7 738.5,345.8 739.5,341.9 740.5,339.3 741.5,335.4 742.5,331.5 743.5,327.6 744.5,325.0 745.5,321.1 746.5,317.2 747.5,314.6 748.5,310.7 749.5,308.1 750.5,304.2 751.5,301.6 752.5,299.0 753.5,296.4 754.5,293.8 755.5,291.2 756.5,288.6 757.5,287.3 758.5,284.7 759.5,283.4 760.5,280.8 761.5,279.5 762.5,278.2 763.5,276.9 764.5,276.9 765.5,275.6 766.5,275.6 767.5,274.3 768.5,274.3 769.5,274.3 770.5,274.3 771.5,274.3 772.5,275.6 773.5,275.6 774.5,276.9 775.5,278.2 776.5,279.5 777.5,280.8 778.5,282.1 779.5,283.4 780.5,286.0 781.5,288.6 782.5,289.9 783.5,292.5 784.5,295.1 785.5,297.7 786.5,300.3 787.5,302.9 788.5,306.8 789.5,309.4 790.5,313.3 791.5,315.9 792.5,319.8 793.5,322.4 794.5,326.3 795.5,330.2 796.5,334.1 797.5,338.0 798.5,340.6 799.5,344.5 800.5,348.4 801.5,352.3 802.5,356.2 803.5,360.1 804.5,362.7 805.5,366.6 806.5,370.5 807.5,374.4 808.5,377.0 809.5,380.9 810.5,383.5 811.5,387.4 812.5,390.0 813.5,393.9 814.5,396.5 815.5,399.1 816.5,401.7 817.5,404.3 818.5,406.9 819.5,408.2 820.5,410.8 821.5,413.4 822.5,414.7 823.5,416.0 824.5,417.3 825.5,418.6 826.5,419.9 827.5,421.2 828.5,421.2 829.5,421.2 830.5,422.5 831.5,422.5 832.5,422.5 833.5,422.5 834.5,421.2 835.5,421.2 836.5,419.9 837.5,418.6 838.5,418.6 839.5,417.3 840.5,414.7 841.5,413.4 842.5,412.1 843.5,409.5 844.5,406.9 845.5,405.6 846.5,403.0 847.5,400.4 848.5,397.8 849.5,395.2 850.5,391.3 851.5,388.7 852.5,384.8 853.5,382.2 854.5,378.3 855.5,375.7 856.5,371.8 857.5,367.9 858.5,365.3 859.5,361.4 860.5,357.5 861.5,353.6 862.5,349.7 863.5,345.8 864.5,341.9 865.5,339.3 866.5,335.4 867.5,331.5 868.5,327.6 869.5,325.0 870.5,321.1 871.5,317.2 872.5,314.6 873.5,310.7 874.5,308.1 875.5,304.2 876.5,301.6 877.5,299.0 878.5,296.4 879.5,293.8 880.5,291.2 881.5,288.6 882.5,287.3 883.5,284.7 884.5,283.4 885.5,280.8 886.5,279.5 887.5,278.2 888.5,276.9 889.5,276.9 890.5,275.6 891.5,275.6 892.5,274.3 893.5,274.3 894.5,274.3 895.5,274.3 896.5,274.3 897.5,275.6 898.5,275.6 899.5,276.9 900.5,278.2 901.5,279.5 902.5,280.8 903.5,282.1 904.5,283.4 905.5,286.0 906.5,288.6 907.5,289.9 908.5,292.5 909.5,295.1 910.5,297.7 911.5,300.3 912.5,302.9 913.5,306.8 914.5,309.4 915.5,313.3 916.5,315.9 917.5,319.8 918.5,322.4 919.5,326.3 920.5,330.2 921.5,334.1 922.5,338.0 923.5,340.6 924.5,344.5 925.5,348.4 926.5,352.3 927.5,356.2 928.5,360.1 929.5,362.7 930.5,366.6 931.5,370.5 932.5,374.4 933.5,377.0 934.5,380.9 935.5,383.5 936.5,387.4 937.5,390.0 938.5,393.9 939.5,396.5 940.5,399.1 941.5,401.7 942.5,404.3 943.5,406.9 944.5,408.2 945.5,410.8 946.5,413.4 947.5,414.7 948.5,416.0 949.5,417.3 950.5,418.6 951.5,419.9 952.5,421.2 953.5,421.2 954.5,421.2 955.5,422.5 956.5,422.5 957.5,422.5 958.5,422.5 959.5,421.2 960.5,421.2 961.5,419.9 962.5,418.6 963.5,418.6 964.5,417.3 965.5,414.7 966.5,413.4 967.5,412.1 968.5,409.5 969.5,406.9 970.5,405.6 971.5,403.0 972.5,400.4 973.5,397.8 974.5,395.2 975.5,391.3 976.5,388.7 977.5,384.8 978.5,382.2 979.5,378.3 980.5,375.7 981.5,371.8 982.5,367.9 983.5,365.3 984.5,361.4 985.5,357.5 986.5,353.6 987.5,349.7 988.5,345.8 989.5,341.9 990.5,339.3 991.5,335.4 992.5,331.5 993.5,327.6 994.5,325.0 995.5,321.1 996.5,317.2 997.5,314.6 998.5,310.7 999.5,308.1 1000.5,304.2 1001.5,301.6 1002.5,299.0 1003.5,296.4 1004.5,293.8 1005.5,291.2 1006.5,288.6 1007.5,287.3 1008.5,284.7 1009.5,283.4 1010.5,280.8 1011.5,279.5 1012.5,278.2 1013.5,276.9 1014.5,276.9 1015.5,275.6 1016.5,275.6 1017.5,274.3 1018.5,274.3 1019.5,274.3" fill="none" stroke="#00e000" stroke-width="1"/>
<line x1="20" y1="281.5" x2="1020" y2="281.5" stroke="#00aa00" stroke-width="1.2"/>
<line x1="20" y1="441.5" x2="1020" y2="441.5" stroke="#00aa00" stroke-width="1.2"/>
<rect x="511.5" y="274" width="15" height="15" fill="none" stroke="#00aa00" stroke-width="1.2"/>
<circle cx="519.5" cy="441.5" r="7.4" fill="none" stroke="#00aa00" stroke-width="1.2"/>
<path d="M1009 346.5l6 -5.5v11z" fill="#aa00aa" shape-rendering="auto"/>
<path d="M1015 346.5h5" stroke="#aa00aa" stroke-width="1.5"/>
</svg>
<svg class="abs" style="left:0;top:0" width="1022" height="769" viewBox="0 0 1022 769">
<path d="M514.5 21h11.5l-5.75 6.5zM514.3 28h12v11l-3.5 3.5h-5l-3.5 -3.5z" fill="#ff9800"/>
<path d="M516 30h9M520.4 30v9.5" stroke="#000" stroke-width="1.7" fill="none"/>
<!-- ch markers -->
<path d="M0 339.5h13l6 7 -6 8h-13z" fill="#aa00aa" stroke="#400040" stroke-width="1"/>
<path d="M0 341.5h13l6 7 -6 8h-13z" fill="#00aa00" stroke="#002000" stroke-width="1"/>
</svg>
<span class="t" style="left:-2px;top:1px;font-family:'Liberation Serif','DejaVu Serif',serif;font-weight:bold;font-size:20px;line-height:20px;letter-spacing:0.2px;color:#000;-webkit-text-stroke:0.4px">Tek</span>
<span class="t" style="left:2.5px;top:341px;font-size:16px;color:#000;-webkit-text-stroke:0.5px">4</span>
<!-- cursor readout -->
<div class="box" style="left:718px;top:44px;width:302px;height:60px"></div>
<div class="abs" style="left:737px;top:48px;width:13px;height:13px;border:1px solid #00aa00"></div>
<div class="abs" style="left:737px;top:67.5px;width:13px;height:13px;border:1px solid #00aa00;border-radius:8px"></div>
<!-- channel bar / measurements -->
<div class="box" style="left:19px;top:602px;width:555px;height:21px"></div>
<div class="box" style="left:19px;top:624px;width:555px;height:93px"></div>
<div class="box" style="left:581px;top:674px;width:148px;height:38px"></div>
<div class="box" style="left:736px;top:674px;width:107px;height:38px"></div>
<div class="box" style="left:850px;top:674px;width:171px;height:38px"></div>
<div class="box" style="left:908px;top:732.5px;width:113px;height:45px"></div>
<div class="btn" style="left:19px;width:114px"></div><div class="btn" style="left:137px;width:114px"></div><div class="btn" style="left:255px;width:114px"></div><div class="btn" style="left:373px;width:114px"></div><div class="btn" style="left:491px;width:114px"></div><div class="btn" style="left:727px;width:114px"></div>
<div class="hl" style="left:57px;top:746px;width:38px;height:16px"></div>
<div class="hl" style="left:275px;top:746px;width:75px;height:16px"></div>
<div class="hl" style="left:522px;top:746px;width:52px;height:16px"></div>
<div class="hl" style="left:764px;top:737px;width:40px;height:16px"></div>
<div class="hl" style="left:377px;top:739px;width:48px;height:32px;border-radius:3px"></div>
<svg class="abs" style="left:0;top:0" width="1022" height="769" viewBox="0 0 1022 769">
<path d="M381 766h15l10.3 -20.7h14.7" fill="none" stroke="#000" stroke-width="1.3"/>
<path d="M403.5 750.5l-0.5 8.5 -6.5 -2.5z" fill="#000"/>
<path d="M438 745.3h15l10.4 20.7h14.4" fill="none" stroke="#000" stroke-width="1.3"/>
<path d="M461 761l-8 -6 6.8 -3z" fill="#000"/>
<path d="M919 689.6h4l4 -10h4" fill="none" stroke="#fff" stroke-width="1.6"/>
<!-- T-> -->
<rect x="586" y="695" width="12" height="13" rx="2" fill="#ff9800"/>
<path d="M587.3 697.1h9.6" stroke="#000" stroke-width="1.8" fill="none"/><path d="M592.1 697v9.8" stroke="#000" stroke-width="2.2" fill="none"/>
<path d="M598.5 701.5h6" stroke="#ff9800" stroke-width="1.3" fill="none"/><path d="M604 698l4.3 3.5 -4.3 3.5z" fill="#ff9800"/>
<path d="M608.8 698.2h11.2l-5.6 6z" fill="#ff9800"/>
<!-- sine + Bw glyphs -->
<g fill="none" stroke-width="1">
<path d="M408 612.5l2.7 -5.5 5 10 2.5 -5" stroke="#aa00aa"/>
<path d="M547 612.5l2.7 -5.5 5 10 2.5 -5" stroke="#00aa00"/>
</g>
</svg>
<div class="circ" style="left:25px;top:283px"></div><div class="circ" style="left:25px;top:423px"></div><div class="circ" style="left:888px;top:48px"></div><div class="circ" style="left:888px;top:67px"></div>
<div class="pill" style="left:303px;top:605px;width:25px;height:16px;background:#aa00aa"></div><div class="pill" style="left:442px;top:605px;width:25px;height:16px;background:#00aa00"></div><div class="pill" style="left:25px;top:645px;width:25px;height:16px;background:#00aa00"></div><div class="pill" style="left:25px;top:663px;width:25px;height:16px;background:#aa00aa"></div><div class="pill" style="left:25px;top:681px;width:25px;height:16px;background:#aa00aa"></div><div class="pill" style="left:25px;top:699px;width:25px;height:16px;background:#00aa00"></div><div class="pill" style="left:182px;top:746px;width:25px;height:16px;background:#aa00aa"></div><div class="pill" style="left:881px;top:677px;width:25px;height:16px;background:#aa00aa"></div>
<div class="abs" style="left:0;top:0;width:1022px;height:769px;will-change:transform">
<span class="t" style="left:35.0px;top:4.0px;color:#ffffff;letter-spacing:1.82px"><span class="c">119/128</span></span>
<span class="t" style="left:926.8px;top:4.0px;color:#ffffff;letter-spacing:0.62px">Trig’d</span>
<span class="t" style="left:792.7px;top:48.0px;color:#00aa00;letter-spacing:1.29px"><span class="c">−200.0</span>µs</span>
<span class="t" style="left:792.7px;top:67.0px;color:#00aa00;letter-spacing:1.29px"><span class="c">−100.0</span>µs</span>
<span class="t" style="left:792.2px;top:86.0px;color:#00aa00;transform:scaleX(1.145)">Δ</span>
<span class="t" style="left:807.7px;top:86.0px;color:#00aa00;letter-spacing:1.14px"><span class="c">100.0</span>µs</span>
<span class="t" style="left:927.8px;top:48.0px;color:#00aa00;letter-spacing:0.83px"><span class="c">20.80</span>mV</span>
<span class="t" style="left:921.1px;top:67.0px;color:#00aa00;letter-spacing:0.97px"><span class="c">−28.40</span>mV</span>
<span class="t" style="left:919.9px;top:86.0px;color:#00aa00;transform:scaleX(1.191)">Δ</span>
<span class="t" style="left:934.8px;top:86.0px;color:#00aa00;letter-spacing:0.99px"><span class="c">49.20</span>mV</span>
<span class="t" style="left:345.9px;top:605.0px;color:#aa00aa;letter-spacing:0.99px"><span class="c">20.0</span>mV</span>
<span class="t" style="left:485.5px;top:605.0px;color:#00aa00;letter-spacing:0.37px"><span class="c">20.0</span>mV</span>
<span class="t" style="left:157.2px;top:627.0px;color:#ffffff;letter-spacing:0.26px">Value</span>
<span class="t" style="left:244.6px;top:627.0px;color:#ffffff;letter-spacing:0.51px">Mean</span>
<span class="t" style="left:327.4px;top:627.0px;color:#ffffff;letter-spacing:1.75px">Min</span>
<span class="t" style="left:409.6px;top:627.0px;color:#ffffff;letter-spacing:-0.27px">Max</span>
<span class="t" style="left:491.8px;top:627.0px;color:#ffffff;letter-spacing:0.17px">Std<span class="c"> </span>Dev</span>
<span class="t" style="left:54.6px;top:645.0px;color:#00aa00;letter-spacing:0.60px">Frequency</span>
<span class="t" style="left:157.0px;top:645.0px;color:#00aa00;letter-spacing:1.10px"><span class="c">79.95 </span>Hz</span>
<span class="t" style="left:246.0px;top:645.0px;color:#00aa00;letter-spacing:1.32px"><span class="c">80.00</span></span>
<span class="t" style="left:327.1px;top:645.0px;color:#00aa00;letter-spacing:1.52px"><span class="c">79.36</span></span>
<span class="t" style="left:409.7px;top:645.0px;color:#00aa00;letter-spacing:1.37px"><span class="c">80.42</span></span>
<span class="t" style="left:492.3px;top:645.0px;color:#00aa00;letter-spacing:1.14px"><span class="c">107.7</span>m</span>
<span class="t" style="left:55.5px;top:663.0px;color:#aa00aa;letter-spacing:0.02px">Peak<span class="c">−</span>Peak</span>
<span class="t" style="left:156.9px;top:663.0px;color:#aa00aa;letter-spacing:0.91px"><span class="c">45.65</span>mV</span>
<span class="t" style="left:245.0px;top:663.0px;color:#aa00aa;letter-spacing:1.32px"><span class="c">46.40</span>m</span>
<span class="t" style="left:326.9px;top:663.0px;color:#aa00aa;letter-spacing:1.36px"><span class="c">45.61</span>m</span>
<span class="t" style="left:408.7px;top:663.0px;color:#aa00aa;letter-spacing:1.40px"><span class="c">56.80</span>m</span>
<span class="t" style="left:492.3px;top:663.0px;color:#aa00aa;letter-spacing:1.14px"><span class="c">1.590</span>m</span>
<span class="t" style="left:54.6px;top:681.0px;color:#aa00aa;letter-spacing:0.60px">Frequency</span>
<span class="t" style="left:157.0px;top:681.0px;color:#aa00aa;letter-spacing:1.10px"><span class="c">79.99 </span>Hz</span>
<span class="t" style="left:245.0px;top:681.0px;color:#aa00aa;letter-spacing:1.57px"><span class="c">79.99</span></span>
<span class="t" style="left:327.1px;top:681.0px;color:#aa00aa;letter-spacing:1.52px"><span class="c">79.16</span></span>
<span class="t" style="left:409.7px;top:681.0px;color:#aa00aa;letter-spacing:1.37px"><span class="c">81.19</span></span>
<span class="t" style="left:491.6px;top:681.0px;color:#aa00aa;letter-spacing:1.28px"><span class="c">240.6</span>m</span>
<span class="t" style="left:55.5px;top:699.0px;color:#00aa00;letter-spacing:0.02px">Peak<span class="c">−</span>Peak</span>
<span class="t" style="left:156.9px;top:699.0px;color:#00aa00;letter-spacing:0.91px"><span class="c">45.70</span>mV</span>
<span class="t" style="left:245.0px;top:699.0px;color:#00aa00;letter-spacing:1.32px"><span class="c">46.24</span>m</span>
<span class="t" style="left:326.9px;top:699.0px;color:#00aa00;letter-spacing:1.36px"><span class="c">45.70</span>m</span>
<span class="t" style="left:408.7px;top:699.0px;color:#00aa00;letter-spacing:1.40px"><span class="c">58.40</span>m</span>
<span class="t" style="left:492.3px;top:699.0px;color:#00aa00;letter-spacing:1.14px"><span class="c">1.568</span>m</span>
<span class="t" style="left:311.0px;top:605.0px;color:#000;transform:scaleX(1.014)"><span class="c">3</span></span>
<span class="t" style="left:450.0px;top:605.0px;color:#000;transform:scaleX(0.975)"><span class="c">4</span></span>
<span class="t" style="left:33.0px;top:645.0px;color:#000;transform:scaleX(0.975)"><span class="c">4</span></span>
<span class="t" style="left:33.0px;top:663.0px;color:#000;transform:scaleX(1.014)"><span class="c">3</span></span>
<span class="t" style="left:33.0px;top:681.0px;color:#000;transform:scaleX(1.014)"><span class="c">3</span></span>
<span class="t" style="left:33.0px;top:699.0px;color:#000;transform:scaleX(0.975)"><span class="c">4</span></span>
<span class="t" style="left:190.0px;top:746.0px;color:#000;transform:scaleX(1.014)"><span class="c">3</span></span>
<span class="t" style="left:889.0px;top:677.0px;color:#000;transform:scaleX(1.014)"><span class="c">3</span></span>
<span class="t" style="left:27.9px;top:283.0px;color:#000;font-size:17px;transform:scaleX(1.013)">a</span>
<span class="t" style="left:28.0px;top:423.0px;color:#000;transform:scaleX(0.975)">b</span>
<span class="t" style="left:890.9px;top:48.0px;color:#000;font-size:17px;transform:scaleX(1.013)">a</span>
<span class="t" style="left:891.0px;top:67.0px;color:#000;transform:scaleX(0.975)">b</span>
<span class="t" style="left:588.3px;top:677.0px;color:#ffffff;letter-spacing:0.61px"><span class="c">10.0</span>ms</span>
<span class="t" style="left:622.3px;top:694.0px;color:#ff9800;letter-spacing:0.98px"><span class="c">0.00000 </span>s</span>
<span class="t" style="left:742.8px;top:677.0px;color:#ffffff;letter-spacing:1.23px"><span class="c">10.0</span>kS<span class="c">/</span>s</span>
<span class="t" style="left:742.8px;top:694.0px;color:#ffffff;letter-spacing:1.00px"><span class="c">1000 </span>points</span>
<span class="t" style="left:964.8px;top:677.0px;color:#ffffff;letter-spacing:0.80px"><span class="c">0.00 </span>V</span>
<span class="t" style="left:923.8px;top:737.0px;color:#ffffff;letter-spacing:1.61px"><span class="c">4 </span>Apr<span class="c"> 2024</span></span>
<span class="t" style="left:914.9px;top:753.0px;color:#ffffff;letter-spacing:1.31px"><span class="c">21:53:09</span></span>
<span class="t" style="left:57.5px;top:729.0px;color:#000;letter-spacing:1.23px">Type</span>
<span class="t" style="left:57.4px;top:746.0px;color:#000;letter-spacing:-0.31px">Edge</span>
<span class="t" style="left:167.9px;top:729.0px;color:#000;letter-spacing:0.26px">Source</span>
<span class="t" style="left:276.8px;top:729.0px;color:#000;letter-spacing:0.84px">Coupling</span>
<span class="t" style="left:275.3px;top:746.0px;color:#000;letter-spacing:0.29px">HF<span class="c"> </span>Reject</span>
<span class="t" style="left:409.0px;top:721.0px;color:#000;letter-spacing:0.15px">Slope</span>
<span class="t" style="left:528.9px;top:729.0px;color:#000;letter-spacing:0.42px">Level</span>
<span class="t" style="left:523.8px;top:746.0px;color:#000;letter-spacing:0.82px"><span class="c">0.00 </span>V</span>
<span class="t" style="left:762.7px;top:720.0px;color:#000;letter-spacing:0.72px">Mode</span>
<span class="t" style="left:765.2px;top:737.0px;color:#000;letter-spacing:1.15px">Auto</span>
<span class="t" style="left:746.9px;top:753.0px;color:#000;letter-spacing:0.79px">&amp;<span class="c"> </span>Holdoff</span>
<span class="t" style="left:421px;top:603.5px;font-size:8px;color:#aa00aa">B</span><span class="t" style="left:425.5px;top:607.5px;font-size:8px;color:#aa00aa">w</span>
<span class="t" style="left:560px;top:603.5px;font-size:8px;color:#00aa00">B</span><span class="t" style="left:564.5px;top:607.5px;font-size:8px;color:#00aa00">w</span>
</div>
<!-- side overlays -->
<div class="abs" style="left:0;top:368px;width:28px;height:40px;background:rgba(60,60,60,.32);border-radius:0 5px 5px 0"></div>
<div class="abs" style="left:993px;top:368px;width:29px;height:40px;background:rgba(60,60,60,.32);border-radius:5px 0 0 5px"></div>
<svg class="abs" style="left:0;top:0" width="1022" height="769" viewBox="0 0 1022 769">
<path d="M10 382l-6.3 6.1 6.3 6.1" fill="none" stroke="rgba(255,255,255,.3)" stroke-width="2"/>
<path d="M1012 382l6.3 6.1 -6.3 6.1" fill="none" stroke="rgba(255,255,255,.32)" stroke-width="2"/>
</svg>
</body></html>
